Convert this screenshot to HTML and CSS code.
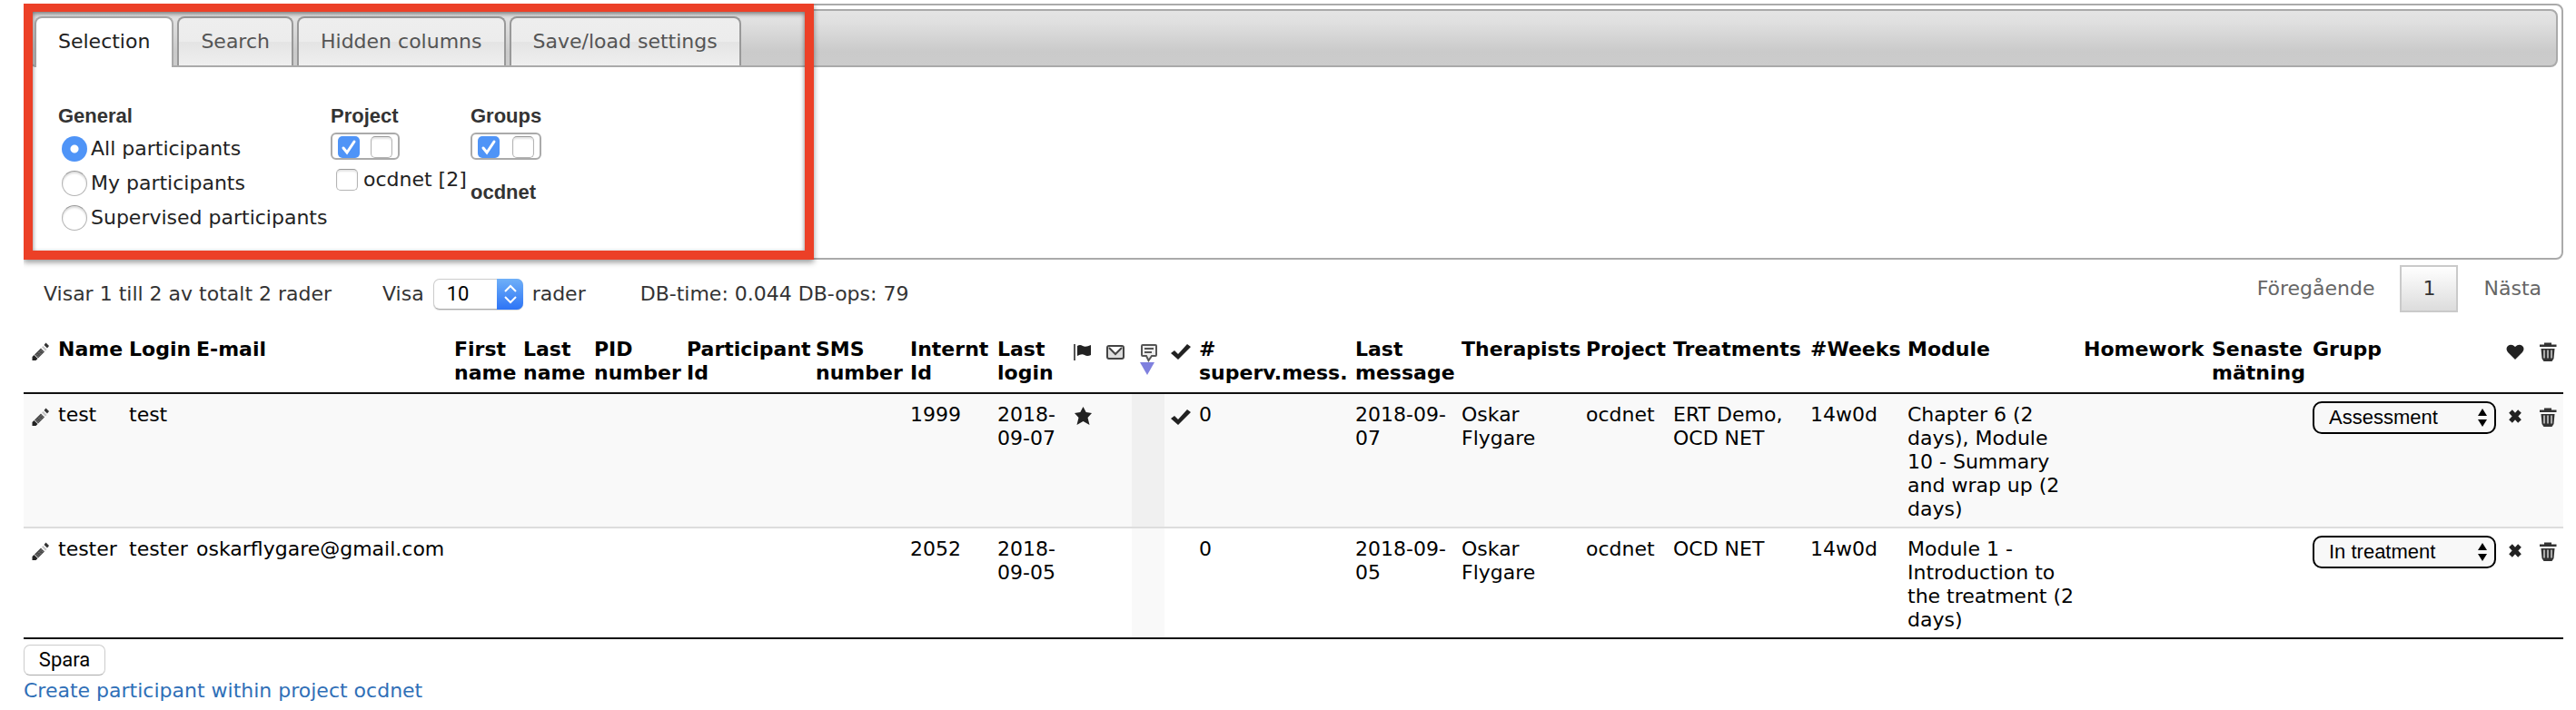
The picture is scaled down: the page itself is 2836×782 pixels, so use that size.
FILE: index.html
```html
<!DOCTYPE html>
<html lang="sv">
<head>
<meta charset="utf-8">
<title>Participants</title>
<link rel="stylesheet" href="styles.css">
</head>
<body>
<svg class="sprite" aria-hidden="true">
  <symbol id="pencil" viewBox="0 0 32 32">
    <path d="M7.500 25v-4l2-2 4 4-2 2z" fill="#222"/>
    <path d="M10 18.500l7-7 4 4-7 7z" fill="#4a4a4a"/>
    <path d="M12 19.500l7-7M13.500 21l6.500-6.500" stroke="#8a8a8a" stroke-width="1" stroke-dasharray="2 1.500"/>
    <path d="M18 10.500l1.500-1.500 4 4-1.500 1.500z" fill="#c4c4c4"/>
    <path d="M20.500 8l2-2.500 3.500 3.500-2 2.500z" fill="#333"/>
  </symbol>
  <symbol id="flag" viewBox="0 0 32 32">
    <path d="M7 7v18" stroke="#555" stroke-width="2"/>
    <path d="M10 9q3-2 6 0t9-1v11q-4 2-7 0t-8 1z" fill="#222"/>
  </symbol>
  <symbol id="mail" viewBox="0 0 32 32">
    <rect x="7" y="9" width="18" height="14" rx="2" fill="#ddd" stroke="#444" stroke-width="2"/>
    <path d="M9 10h14l-7 7z" fill="#fff"/>
    <path d="M9 11l7 7 7-7" fill="none" stroke="#444" stroke-width="2"/>
  </symbol>
  <symbol id="comment" viewBox="0 0 32 32">
    <path d="M10 8h14q1 0 1 1v10q0 1-1 1h-4l-3.500 5-2.500-5h-4q-1 0-1-1v-10q0-1 1-1z" fill="#eee" stroke="#555" stroke-width="2"/>
    <path d="M12 12h10M12 16h8" stroke="#555" stroke-width="2"/>
  </symbol>
  <symbol id="check" viewBox="0 0 32 32">
    <path d="M5 17l4-3 4 4 10-11 4 3-14 14z" fill="#222"/>
  </symbol>
  <symbol id="star" viewBox="0 0 32 32">
    <path d="M16.500 4l3.200 6 6.300 1-4.500 5 2 8-7-4-7 4 2-8-4.500-5 6.300-1z" fill="#222"/>
  </symbol>
  <symbol id="heart" viewBox="0 0 32 32">
    <path d="M17 24l-8-8q-3-4 0-7 4-3 8 1 4-4 8-1 3 3 0 7z" fill="#222"/>
  </symbol>
  <symbol id="cross" viewBox="0 0 32 32">
    <path d="M12 9l10 11M22 9l-10 11" stroke="#222" stroke-width="5"/>
  </symbol>
  <symbol id="trash" viewBox="0 0 32 32">
    <path d="M13 5.500h8v2h5.500v2.500h-18.500v-2.500h5z" fill="#333"/>
    <path d="M9.500 12h15l-1 11-2 3h-9l-2-3z" fill="#333"/>
    <path d="M13 13.500v9M17 13.500v9M21 13.500v9" stroke="#aaa" stroke-width="2"/>
  </symbol>
</svg>

<section class="filters">
  <div class="tabs" role="tablist">
    <button type="button" class="tab tab-active" role="tab" aria-selected="true">Selection</button>
    <button type="button" class="tab" role="tab" aria-selected="false">Search</button>
    <button type="button" class="tab" role="tab" aria-selected="false">Hidden columns</button>
    <button type="button" class="tab" role="tab" aria-selected="false">Save/load settings</button>
  </div>
  <div class="filter-body">
    <div class="filter-col">
      <h2 class="filter-title">General</h2>
      <label class="option"><input class="radio" type="radio" name="scope" checked>All participants</label>
      <label class="option"><input class="radio" type="radio" name="scope">My participants</label>
      <label class="option"><input class="radio" type="radio" name="scope">Supervised participants</label>
    </div>
    <div class="filter-col">
      <h2 class="filter-title">Project</h2>
      <div class="toggle-pair">
        <input class="box" type="checkbox" checked aria-label="All projects">
        <input class="box" type="checkbox" aria-label="No projects">
      </div>
      <label class="choice"><input class="box" type="checkbox">ocdnet [2]</label>
    </div>
    <div class="filter-col">
      <h2 class="filter-title">Groups</h2>
      <div class="toggle-pair toggle-wide">
        <input class="box" type="checkbox" checked aria-label="All groups">
        <input class="box" type="checkbox" aria-label="No groups">
      </div>
      <h3 class="filter-title group-name">ocdnet</h3>
    </div>
  </div>
  <div class="highlight"></div>
</section>

<div class="toolbar">
  <div class="status">
    <span class="summary">Visar 1 till 2 av totalt 2 rader</span>
    <label class="length">Visa
      <span class="length-box">
        <select class="length-select"><option>10</option></select>
        <svg class="stepper" viewBox="0 0 29 34" aria-hidden="true"><path d="M9 14l6-6 6 6M9 20l6 6 6-6" fill="none" stroke="#fff" stroke-width="2"/></svg>
      </span>
      rader</label>
    <span class="timing">DB-time: 0.044 DB-ops: 79</span>
  </div>
  <nav class="pager">
    <button type="button" class="page-link">Föregående</button>
    <button type="button" class="page-current">1</button>
    <button type="button" class="page-link">Nästa</button>
  </nav>
</div>

<table class="grid">
  <colgroup>
    <col class="c-icon"><col class="c-name"><col class="c-login"><col class="c-mail"><col class="c-first"><col class="c-last"><col class="c-pid"><col class="c-part"><col class="c-sms"><col class="c-id"><col class="c-seen"><col class="c-icon"><col class="c-icon"><col class="c-icon"><col class="c-icon"><col class="c-superv"><col class="c-message"><col class="c-ther"><col class="c-project"><col class="c-treat"><col class="c-weeks"><col class="c-module"><col class="c-home"><col class="c-latest"><col class="c-group"><col class="c-icon"><col class="c-icon">
  </colgroup>
  <thead>
    <tr>
      <th><svg class="icon"><use href="#pencil"/></svg></th>
      <th>Name</th><th>Login</th><th>E-mail</th><th>First name</th><th>Last name</th><th>PID number</th><th>Participant Id</th><th>SMS number</th><th>Internt Id</th><th>Last login</th>
      <th><svg class="icon"><use href="#flag"/></svg></th>
      <th><svg class="icon"><use href="#mail"/></svg></th>
      <th class="sort-cell"><svg class="icon"><use href="#comment"/></svg><svg class="sort-mark" viewBox="0 0 16 14"><path d="M0 0h16l-8 14z" fill="#7f80de"/></svg></th>
      <th><svg class="icon"><use href="#check"/></svg></th>
      <th># superv.mess.</th><th>Last message</th><th>Therapists</th><th>Project</th><th>Treatments</th><th>#Weeks</th><th>Module</th><th>Homework</th><th>Senaste mätning</th><th>Grupp</th>
      <th><svg class="icon"><use href="#heart"/></svg></th>
      <th><svg class="icon"><use href="#trash"/></svg></th>
    </tr>
  </thead>
  <tbody>
    <tr class="odd">
      <td><button type="button" class="icon-button" aria-label="Edit test"><svg class="icon"><use href="#pencil"/></svg></button></td>
      <td>test</td><td>test</td><td></td><td></td><td></td><td></td><td></td><td></td><td>1999</td><td>2018-09-07</td>
      <td><svg class="icon"><use href="#star"/></svg></td><td></td><td class="sorted"></td>
      <td><svg class="icon"><use href="#check"/></svg></td>
      <td>0</td><td>2018-09-07</td><td>Oskar Flygare</td><td>ocdnet</td><td>ERT Demo, OCD NET</td><td>14w0d</td><td class="module">Chapter 6 (2 days), Module 10 - Summary and wrap up (2 days)</td><td></td><td></td>
      <td class="group-cell"><span class="group-box"><select class="group-select" aria-label="Grupp test"><option>Assessment</option></select><svg class="arrows" viewBox="0 0 10 20" aria-hidden="true"><path d="M0 8l5-8 5 8zM0 12l5 8 5-8z"/></svg></span></td>
      <td><button type="button" class="icon-button" aria-label="Clear test"><svg class="icon"><use href="#cross"/></svg></button></td>
      <td><button type="button" class="icon-button" aria-label="Delete test"><svg class="icon"><use href="#trash"/></svg></button></td>
    </tr>
    <tr class="even">
      <td><button type="button" class="icon-button" aria-label="Edit tester"><svg class="icon"><use href="#pencil"/></svg></button></td>
      <td>tester</td><td>tester</td><td>oskarflygare@gmail.com</td><td></td><td></td><td></td><td></td><td></td><td>2052</td><td>2018-09-05</td>
      <td></td><td></td><td class="sorted"></td><td></td>
      <td>0</td><td>2018-09-05</td><td>Oskar Flygare</td><td>ocdnet</td><td>OCD NET</td><td>14w0d</td><td class="module">Module 1 - Introduction to the treatment (2 days)</td><td></td><td></td>
      <td class="group-cell"><span class="group-box"><select class="group-select" aria-label="Grupp tester"><option>In treatment</option></select><svg class="arrows" viewBox="0 0 10 20" aria-hidden="true"><path d="M0 8l5-8 5 8zM0 12l5 8 5-8z"/></svg></span></td>
      <td><button type="button" class="icon-button" aria-label="Clear tester"><svg class="icon"><use href="#cross"/></svg></button></td>
      <td><button type="button" class="icon-button" aria-label="Delete tester"><svg class="icon"><use href="#trash"/></svg></button></td>
    </tr>
  </tbody>
</table>

<div class="actions">
  <button type="button" class="save">Spara</button>
  <a class="create" href="#create">Create participant within project ocdnet</a>
</div>
</body>
</html>
```

FILE: styles.css
```css
* {
  box-sizing: border-box;
}

body {
  margin: 4px 14px 0 26px;
  background: #fff;
  color: #000;
  font: 22px/26px "DejaVu Sans", Verdana, sans-serif;
}

button,
input,
select {
  margin: 0;
  font: inherit;
  appearance: none;
}

.sprite {
  display: none;
}

/* Filter panel */

.filters {
  position: relative;
  padding: 4px;
  border: 2px solid #aaa;
  border-radius: 8px;
  color: #222;
}

.tabs {
  display: flex;
  align-items: flex-end;
  gap: 4px;
  height: 64px;
  padding: 0 4px;
  border: 2px solid #aaa;
  border-radius: 8px;
  background: linear-gradient(#e4e4e4, #e0e0e0 20%, #cacaca 75%, #ccc);
}

.tab {
  height: 54px;
  padding: 0 24px;
  border: 2px solid #999;
  border-bottom: 0;
  border-radius: 8px 8px 0 0;
  background: linear-gradient(#eee, #ececec 50%, #e4e4e4 51%, #efefef);
  color: #555;
}

.tab-active {
  height: 56px;
  margin-bottom: -2px;
  padding-bottom: 2px;
  border-color: #aaa;
  background: #fff;
  color: #212121;
}

.filter-body {
  display: grid;
  grid-template-columns: 300px 154px 1fr;
  min-height: 206px;
  padding: 40px 32px 0;
}

.filter-title {
  margin: 0;
  color: #333;
  font: bold 22px/28px "Liberation Sans", Arial, sans-serif;
}

.option {
  display: flex;
  align-items: center;
  gap: 4px;
  height: 38px;
  padding-left: 4px;
  white-space: nowrap;
}

.option:first-of-type {
  margin-top: 3px;
}

.radio {
  width: 28px;
  height: 28px;
  border: 1px solid #b4b4b4;
  border-top-color: #999;
  border-radius: 50%;
  background: #fff;
  box-shadow: inset 0 2px 2px #ddd;
}

.radio:checked {
  border: 0;
  background: radial-gradient(circle, #fff 4px, #4f94f7 5px);
  box-shadow: none;
}

.box {
  flex: none;
  width: 24px;
  height: 24px;
  border: 1px solid #b4b4b4;
  border-top-color: #999;
  border-radius: 5px;
  background: #fff;
  box-shadow: inset 0 2px 2px #e4e4e4;
}

.box:checked {
  border: 0;
  background: #4f94f7 url("data:image/svg+xml,%3Csvg xmlns='http://www.w3.org/2000/svg' viewBox='0 0 24 24'%3E%3Cpath d='M6 13l4 5 8-12' fill='none' stroke='%23fff' stroke-width='3' stroke-linecap='round'/%3E%3C/svg%3E");
  box-shadow: none;
}

.toggle-pair {
  display: flex;
  gap: 12px;
  width: 76px;
  height: 30px;
  margin-top: 4px;
  padding: 2px 6px;
  border: 2px solid #aaa;
  border-radius: 6px;
}

.toggle-wide {
  gap: 14px;
  width: 78px;
}

.choice {
  display: flex;
  align-items: center;
  gap: 6px;
  height: 26px;
  margin-top: 9px;
  padding-left: 6px;
  white-space: nowrap;
}

.group-name {
  margin-top: 22px;
}

.highlight {
  position: absolute;
  top: -3px;
  left: -2px;
  width: 870px;
  height: 283px;
  border: 10px solid #ec4027;
  box-shadow: 0 3px 6px rgba(0, 0, 0, .4), inset 0 2px 5px rgba(0, 0, 0, .5);
  pointer-events: none;
}

/* Toolbar */

.toolbar {
  display: flex;
  justify-content: space-between;
  height: 78px;
  padding: 6px 24px 0 22px;
  color: #333;
}

.status {
  display: flex;
  align-items: center;
  gap: 46px;
  height: 64px;
}

.summary {
  min-width: 327px;
}

.timing {
  margin-left: 14px;
}

.length {
  display: flex;
  align-items: center;
  gap: 10px;
}

.length-box,
.group-box {
  position: relative;
  display: block;
}

.length-select {
  display: block;
  width: 99px;
  height: 34px;
  padding: 0 14px;
  border: 1px solid #ccc;
  border-bottom-color: #aaa;
  border-radius: 7px;
  background: #fff;
  box-shadow: 0 1px 1px #ddd;
  color: #000;
  font-family: Roboto, sans-serif;
}

.stepper {
  position: absolute;
  top: 0;
  right: 0;
  width: 29px;
  height: 34px;
  border-radius: 0 7px 7px 0;
  background: linear-gradient(#6fb0f8, #2d74f6);
  pointer-events: none;
}

.pager {
  display: flex;
  gap: 28px;
}

.page-link {
  height: 52px;
  padding: 0;
  border: 0;
  background: none;
  color: #666;
}

.page-current {
  width: 64px;
  height: 52px;
  padding: 0;
  border: 2px solid #cacaca;
  background: linear-gradient(#fff, #dcdcdc);
  color: #333;
}

/* Participant table */

.grid {
  width: 100%;
  table-layout: fixed;
  border-spacing: 0;
  border-bottom: 2px solid #111;
}

.grid th,
.grid td {
  padding: 10px 0 6px 2px;
  text-align: left;
  vertical-align: top;
}

.grid th {
  padding: 8px 0 8px 2px;
  border-bottom: 2px solid #111;
}

.grid .group-cell {
  padding-top: 8px;
}

.grid .module {
  padding-right: 6px;
}

.odd {
  background: #f9f9f9;
}

.even td {
  border-top: 2px solid #ddd;
}

.odd .sorted {
  background: #f0f0f0;
}

.even .sorted {
  background: #f9f9f9;
}

.c-icon { width: 36px; }
.c-name { width: 78px; }
.c-login { width: 74px; }
.c-mail { width: 284px; }
.c-first { width: 76px; }
.c-last { width: 78px; }
.c-pid { width: 102px; }
.c-part { width: 142px; }
.c-sms { width: 104px; }
.c-id { width: 96px; }
.c-seen { width: 78px; }
.c-superv { width: 172px; }
.c-message { width: 117px; }
.c-ther { width: 137px; }
.c-project { width: 96px; }
.c-treat { width: 151px; }
.c-weeks { width: 107px; }
.c-module { width: 194px; }
.c-home { width: 141px; }
.c-latest { width: 111px; }
.c-group { width: 206px; }

.icon {
  display: block;
  width: 32px;
  height: 32px;
}

.icon-button {
  display: block;
  padding: 0;
  border: 0;
  background: none;
}

.sort-cell {
  position: relative;
}

.sort-mark {
  position: absolute;
  top: 35px;
  left: 9px;
  width: 16px;
  height: 14px;
}

.group-box {
  width: 202px;
}

.group-select {
  display: block;
  width: 100%;
  height: 36px;
  padding: 0 16px;
  border: 2px solid #000;
  border-radius: 10px;
  background: #f8f8f8;
  color: #000;
  font-family: "Liberation Sans", Arial, sans-serif;
}

.arrows {
  position: absolute;
  top: 8px;
  right: 10px;
  width: 10px;
  height: 20px;
  pointer-events: none;
}

/* Actions */

.actions {
  display: flex;
  flex-direction: column;
  align-items: flex-start;
  gap: 4px;
  padding-top: 6px;
}

.save {
  width: 90px;
  height: 34px;
  padding: 0;
  border: 1px solid #ccc;
  border-bottom-color: #aaa;
  border-radius: 7px;
  background: #fff;
  color: #000;
  font-family: Roboto, sans-serif;
}

.create {
  color: #2f6fb7;
  text-decoration: none;
}
```
